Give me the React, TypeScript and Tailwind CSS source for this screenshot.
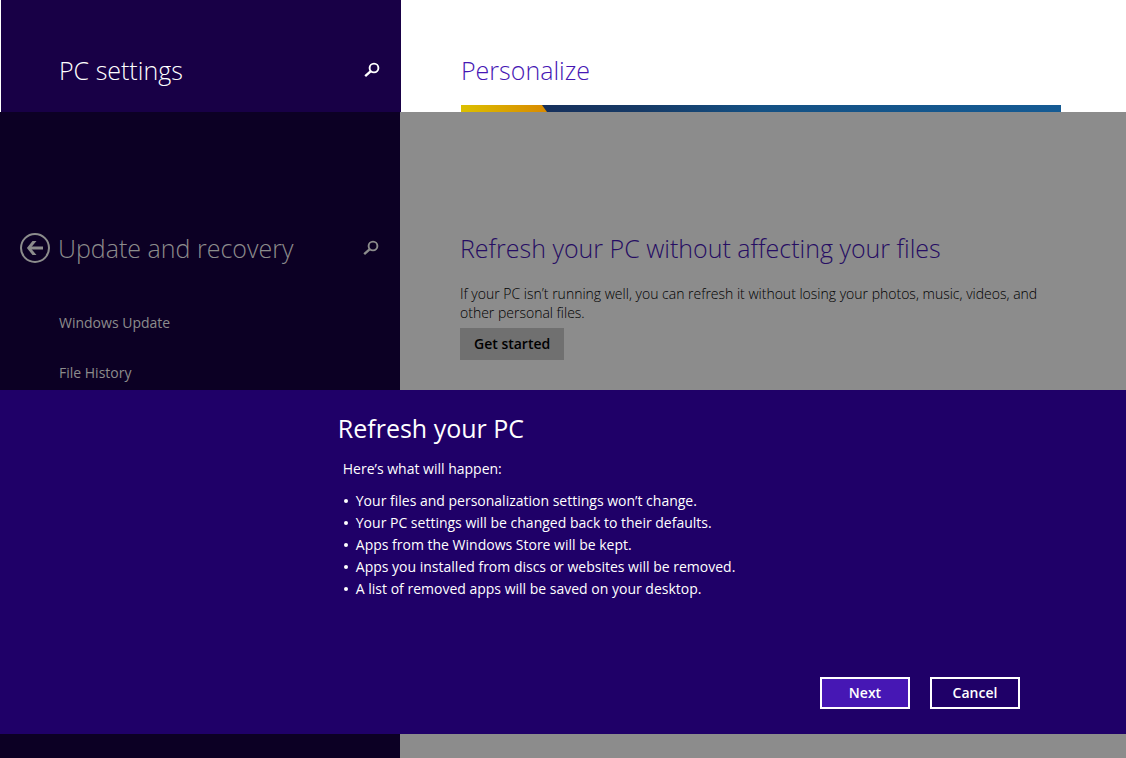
import type { ReactNode } from "react";

const NAV_ITEMS = ["Windows Update", "File History"];

const CHANGES = [
  "Your files and personalization settings won’t change.",
  "Your PC settings will be changed back to their defaults.",
  "Apps from the Windows Store will be kept.",
  "Apps you installed from discs or websites will be removed.",
  "A list of removed apps will be saved on your desktop.",
];

function SearchButton() {
  return (
    <button type="button" aria-label="Search" className="size-4">
      <svg viewBox="0 0 16 16" className="size-4" fill="none" stroke="currentColor">
        <circle cx="10" cy="6" r="4.4" strokeWidth="1.9" />
        <path d="M6.8 9.2 1.2 14.2" strokeWidth="2.4" />
      </svg>
    </button>
  );
}

function BackButton() {
  return (
    <button type="button" aria-label="Back" className="size-[30px]">
      <svg viewBox="0 0 30 30" className="size-[30px]" fill="none" stroke="currentColor">
        <circle cx="15" cy="15" r="14" strokeWidth="2" />
        <path d="M23 15H9.5" strokeWidth="3" />
        <path d="M16.5 7.9h-4L6.9 15l5.6 7.1h4L10.6 15z" fill="currentColor" stroke="none" />
      </svg>
    </button>
  );
}

function DialogButton({ primary, children }: { primary?: boolean; children: ReactNode }) {
  return (
    <button
      type="button"
      className={`h-8 w-[90px] border-2 border-white text-sm font-semibold ${
        primary ? "bg-[#4617b4]" : "bg-transparent"
      }`}
    >
      {children}
    </button>
  );
}

function PersonalizeHeader() {
  return (
    <header className="flex h-28 bg-white pl-px">
      <div className="flex w-[400px] shrink-0 items-start justify-between bg-[#180046] pt-[54px] pr-[21px] pl-[58px] text-white">
        <h1 className="text-[25px] leading-8 font-light">PC settings</h1>
        <div className="flex h-8 items-center">
          <SearchButton />
        </div>
      </div>
      <div className="flex grow flex-col justify-between pt-[54px] pr-[65px] pl-[60px]">
        <h2 className="text-[25px] leading-8 font-light text-[#4617b4]">Personalize</h2>
        <svg viewBox="0 0 600 7" preserveAspectRatio="none" className="h-[7px] w-full">
          <defs>
            <linearGradient id="gold">
              <stop offset="0" stopColor="#dcc000" />
              <stop offset="1" stopColor="#d98a00" />
            </linearGradient>
            <linearGradient id="sea">
              <stop offset="0.14" stopColor="#16305c" />
              <stop offset="0.3" stopColor="#163a66" />
              <stop offset="0.5" stopColor="#145184" />
              <stop offset="1" stopColor="#155b94" />
            </linearGradient>
          </defs>
          <path d="M0 0h600v7H0z" fill="url(#sea)" />
          <path d="M0 0h81l5 7H0z" fill="url(#gold)" />
        </svg>
      </div>
    </header>
  );
}

function RefreshDialog() {
  return (
    <section
      role="dialog"
      aria-labelledby="refresh-title"
      className="absolute inset-x-0 bottom-6 bg-[#1f0068] pt-[22px] pb-[25px] pl-[30%] text-white"
    >
      <h2 id="refresh-title" className="text-[25px] leading-8">
        Refresh your PC
      </h2>
      <div className="pl-[5px] text-sm leading-[22px]">
        <p className="pt-[14px]">Here’s what will happen:</p>
        <ul className="pt-[10px] pl-px">
          {CHANGES.map((change) => (
            <li key={change} className="flex items-center gap-2">
              <span className="size-1 rounded-full bg-white" />
              {change}
            </li>
          ))}
        </ul>
      </div>
      <div className="flex justify-end gap-5 pt-[77px] pr-[106px]">
        <DialogButton primary>Next</DialogButton>
        <DialogButton>Cancel</DialogButton>
      </div>
    </section>
  );
}

export default function App() {
  return (
    <div className="flex min-h-screen flex-col font-['Open_Sans','Noto_Sans',sans-serif]">
      <PersonalizeHeader />
      <main className="relative flex grow pb-[368px]">
        <div className="-mb-[368px] w-[400px] shrink-0 bg-[#0c0024] pt-[120px] text-[#8c8c8c]">
          <div className="flex items-center pr-[21px] pl-5">
            <BackButton />
            <h2 className="grow pl-2 text-[25px] leading-8 font-light">Update and recovery</h2>
            <SearchButton />
          </div>
          <nav className="flex flex-col gap-7 pt-12 pl-[59px] text-sm leading-[22px]">
            {NAV_ITEMS.map((item) => (
              <a key={item} href="#">
                {item}
              </a>
            ))}
          </nav>
        </div>
        <div className="-mb-[368px] grow bg-[#8c8c8c] pt-[120px] pr-[65px] pl-[60px]">
          <h2 className="text-[25px] leading-8 font-light text-[#260d63]">
            Refresh your PC without affecting your files
          </h2>
          <p className="pt-5 text-sm leading-[19px] font-[350] text-black">
            If your PC isn’t running well, you can refresh it without losing your photos, music, videos, and
            other personal files.
          </p>
          <button type="button" className="mt-[6px] h-8 bg-[#707070] px-[14px] text-sm font-semibold text-black">
            Get started
          </button>
        </div>
        <RefreshDialog />
      </main>
    </div>
  );
}
